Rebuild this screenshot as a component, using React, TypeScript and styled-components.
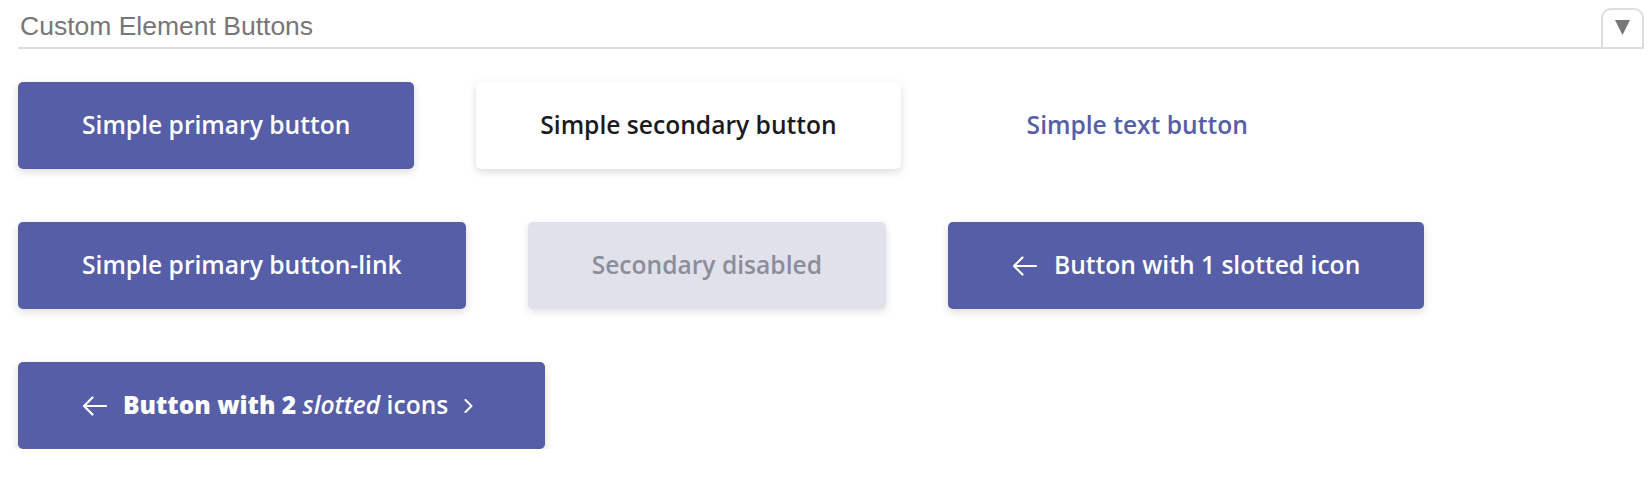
import React from "react";
import styled, { createGlobalStyle, css } from "styled-components";

const Global = createGlobalStyle`
  html, body { margin: 0; padding: 0; background: #ffffff; }
  body { font-family: "Open Sans", "Liberation Sans", sans-serif; }
`;

const Page = styled.div`
  padding: 0 6px 0 18px;
`;

const Header = styled.div`
  display: flex;
  justify-content: space-between;
  align-items: flex-end;
  height: 49px;
  box-sizing: border-box;
  border-bottom: 2px solid #dddddd;
`;

const Title = styled.h2`
  align-self: flex-start;
  margin: 13px 0 0 2px;
  font-family: "Liberation Sans", Arial, sans-serif;
  font-weight: 400;
  font-size: 26.5px;
  line-height: 26px;
  color: #777777;
`;

const Toggle = styled.button`
  display: flex;
  align-items: flex-start;
  justify-content: center;
  width: 43px;
  height: 39px;
  box-sizing: border-box;
  padding: 10px 0 0;
  margin: 0;
  border: 2px solid #dddddd;
  border-bottom: none;
  border-radius: 10px 10px 0 0;
  background: #ffffff;
`;

const Rows = styled.div`
  display: flex;
  flex-direction: column;
  gap: 53px;
  padding-top: 33px;
`;

const Row = styled.div`
  display: flex;
  gap: 62px;
  align-items: center;
`;

type Variant = "primary" | "secondary" | "text" | "disabled";

const Btn = styled.button<{ $variant: Variant }>`
  display: inline-flex;
  align-items: center;
  justify-content: center;
  height: 87px;
  box-sizing: border-box;
  padding: 0 64px;
  border: none;
  border-radius: 5px;
  font-family: "Open Sans", sans-serif;
  font-weight: 600;
  font-size: 24.6px;
  line-height: 1;
  white-space: nowrap;
  ${(p) =>
    p.$variant === "primary" &&
    css`
      background: #565ea7;
      color: #ffffff;
      box-shadow: 0 3px 8px rgba(0, 0, 0, 0.14);
    `}
  ${(p) =>
    p.$variant === "secondary" &&
    css`
      background: #ffffff;
      color: #1b1b1f;
      box-shadow: 0 3px 9px rgba(0, 0, 0, 0.14);
    `}
  ${(p) =>
    p.$variant === "text" &&
    css`
      background: transparent;
      color: #565ea7;
    `}
  ${(p) =>
    p.$variant === "disabled" &&
    css`
      background: #e0e1eb;
      color: #8c8d9b;
      box-shadow: 0 3px 8px rgba(0, 0, 0, 0.12);
    `}
`;

const IconGap = styled.span<{ $gap: number }>`
  display: inline-flex;
  align-items: center;
  gap: ${(p) => p.$gap}px;
`;

const Strong = styled.b`
  font-weight: 800;
`;

const Em = styled.i`
  font-style: italic;
  font-weight: 600;
`;

const ArrowLeft = () => (
  <svg width="25" height="20" viewBox="0 0 25 20" fill="none">
    <path
      d="M24 10H2M10.5 1.5L2 10l8.5 8.5"
      stroke="#ffffff"
      strokeWidth="2.2"
      strokeLinecap="round"
      strokeLinejoin="round"
    />
  </svg>
);

const ChevronRight = () => (
  <svg width="17" height="14" viewBox="0 0 17 14" fill="none">
    <path
      d="M1.5 1l6 6-6 6"
      stroke="#ffffff"
      strokeWidth="2"
      strokeLinecap="round"
      strokeLinejoin="round"
    />
  </svg>
);

const Triangle = () => (
  <svg width="15" height="15" viewBox="0 0 15 15">
    <polygon points="0,0 15,0 7.5,15" fill="#777777" />
  </svg>
);

export default function App() {
  return (
    <>
      <Global />
      <Page>
        <Header>
          <Title>Custom Element Buttons</Title>
          <Toggle aria-label="toggle">
            <Triangle />
          </Toggle>
        </Header>
        <Rows>
          <Row>
            <Btn $variant="primary">Simple primary button</Btn>
            <Btn $variant="secondary">Simple secondary button</Btn>
            <Btn $variant="text">Simple text button</Btn>
          </Row>
          <Row>
            <Btn $variant="primary">Simple primary button-link</Btn>
            <Btn $variant="disabled">Secondary disabled</Btn>
            <Btn $variant="primary">
              <IconGap $gap={17}>
                <ArrowLeft />
                <span>Button with 1 slotted icon</span>
              </IconGap>
            </Btn>
          </Row>
          <Row>
            <Btn $variant="primary">
              <IconGap $gap={16}>
                <ArrowLeft />
                <span>
                  <Strong>Button with 2</Strong> <Em>slotted</Em> icons
                </span>
                <ChevronRight />
              </IconGap>
            </Btn>
          </Row>
        </Rows>
      </Page>
    </>
  );
}
